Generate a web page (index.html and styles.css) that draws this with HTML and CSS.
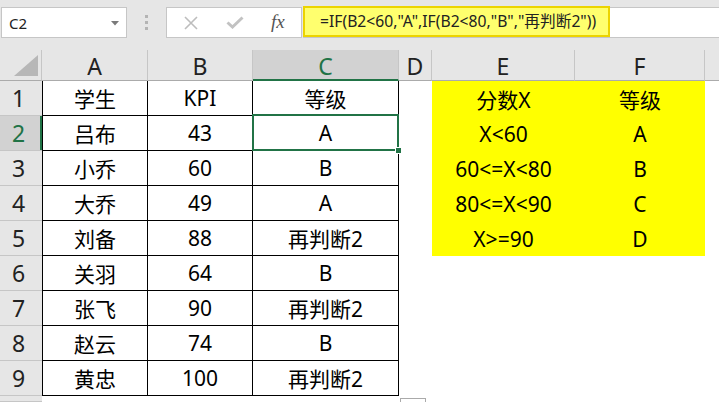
FILE: index.html
```html
<!DOCTYPE html>
<html lang="zh-CN">

<head>
    <meta charset="UTF-8">
    <title>IF 嵌套</title>
    <link rel="stylesheet" href="styles.css">
</head>

<body>
    <div class="toolbar">
        <div class="namebox">
            <span>C2</span>
            <svg class="arrow" width="8" height="5" viewBox="0 0 8 5"><path d="M0 0H8L4 4.5Z" fill="#7a7a7a"/></svg>
        </div>
        <div class="grip"><i></i><i></i><i></i></div>
        <div class="fxbox">
            <svg width="14" height="14" viewBox="0 0 14 14"><path d="M1 1L13 13M13 1L1 13" stroke="#bdbdbd" stroke-width="1.6" fill="none"/></svg>
            <svg width="18" height="13" viewBox="0 0 18 13"><path d="M1.5 6.5L6.5 11L16.5 1.5" stroke="#c2c2c2" stroke-width="3" fill="none"/></svg>
            <span class="fx">fx</span>
        </div>
        <div class="formula">
            <span class="hl">=IF(B2&lt;60,"A",IF(B2&lt;80,"B","再判断2"))</span>
        </div>
    </div>

    <div class="sheet">
        <!-- column headers -->
        <div class="corner"><svg width="24" height="21" viewBox="0 0 24 21"><path d="M24 0V21H0Z" fill="#b7b7b7"/></svg></div>
        <div class="ch">A</div>
        <div class="ch">B</div>
        <div class="ch on">C</div>
        <div class="ch">D</div>
        <div class="ch">E</div>
        <div class="ch">F</div>
        <div class="ch last"></div>

        <div class="rh">1</div>
        <div class="c b first">学生</div>
        <div class="c b">KPI</div>
        <div class="c b">等级</div>
        <div class="c"></div>
        <div class="c y">分数X</div>
        <div class="c y">等级</div>
        <div class="c"></div>

        <div class="rh on">2</div>
        <div class="c b first">吕布</div>
        <div class="c b">43</div>
        <div class="c b sel">A</div>
        <div class="c"></div>
        <div class="c y">X&lt;60</div>
        <div class="c y">A</div>
        <div class="c"></div>

        <div class="rh">3</div>
        <div class="c b first">小乔</div>
        <div class="c b">60</div>
        <div class="c b">B</div>
        <div class="c"></div>
        <div class="c y">60&lt;=X&lt;80</div>
        <div class="c y">B</div>
        <div class="c"></div>

        <div class="rh">4</div>
        <div class="c b first">大乔</div>
        <div class="c b">49</div>
        <div class="c b">A</div>
        <div class="c"></div>
        <div class="c y">80&lt;=X&lt;90</div>
        <div class="c y">C</div>
        <div class="c"></div>

        <div class="rh">5</div>
        <div class="c b first">刘备</div>
        <div class="c b">88</div>
        <div class="c b">再判断2</div>
        <div class="c"></div>
        <div class="c y">X&gt;=90</div>
        <div class="c y">D</div>
        <div class="c"></div>

        <div class="rh">6</div>
        <div class="c b first">关羽</div>
        <div class="c b">64</div>
        <div class="c b">B</div>
        <div class="c"></div>
        <div class="c"></div>
        <div class="c"></div>
        <div class="c"></div>

        <div class="rh">7</div>
        <div class="c b first">张飞</div>
        <div class="c b">90</div>
        <div class="c b">再判断2</div>
        <div class="c"></div>
        <div class="c"></div>
        <div class="c"></div>
        <div class="c"></div>

        <div class="rh">8</div>
        <div class="c b first">赵云</div>
        <div class="c b">74</div>
        <div class="c b">B</div>
        <div class="c"></div>
        <div class="c"></div>
        <div class="c"></div>
        <div class="c"></div>

        <div class="rh">9</div>
        <div class="c b first">黄忠</div>
        <div class="c b">100</div>
        <div class="c b">再判断2</div>
        <div class="c"></div>
        <div class="c"></div>
        <div class="c"></div>
        <div class="c"></div>

        <!-- row 10, only its top edge is in view -->
        <div class="rh"></div>
        <div class="c"></div>
        <div class="c"></div>
        <div class="c"></div>
        <div class="c"></div>
        <div class="c"></div>
        <div class="c"></div>
        <div class="c"></div>

        <div class="quick"></div>
    </div>
</body>

</html>
```

FILE: styles.css
```css
body {
    margin: 0;
    width: 719px;
    height: 402px;
    overflow: hidden;
    background-color: #fff;
    font-family: "Noto Sans", "Noto Sans CJK SC", sans-serif;
}

.toolbar {
    height: 50px;
    box-sizing: border-box;
    padding-top: 7px;
    background-color: #e6e6e6;
    display: flex;
    align-items: flex-start;
}

.namebox {
    margin-left: 1px;
    width: 126px;
    height: 31px;
    box-sizing: border-box;
    border: 1px solid #c6c6c6;
    background-color: #fff;
    display: flex;
    align-items: center;
    justify-content: space-between;
    padding: 0 7px 0 7px;
    font-size: 15px;
    color: #222;
}

.namebox .arrow {
    margin-top: 1px;
}

.grip {
    width: 39px;
    height: 31px;
    display: flex;
    flex-direction: column;
    align-items: center;
    justify-content: center;
    gap: 3px;
}

.grip i {
    display: block;
    width: 3px;
    height: 3px;
    background-color: #b4b4b4;
}

.fxbox {
    width: 136px;
    height: 31px;
    box-sizing: border-box;
    border: 1px solid #c6c6c6;
    background-color: #fff;
    display: flex;
    align-items: center;
    padding-left: 17px;
    gap: 28px;
}

.fx {
    font-family: "Liberation Serif", serif;
    font-style: italic;
    font-size: 19px;
    color: #555;
    margin-left: -1px;
    margin-top: -2px;
}

.formula {
    flex: 1;
    height: 31px;
    margin-left: 1px;
    box-sizing: border-box;
    border-top: 1px solid #c6c6c6;
    border-bottom: 1px solid #c6c6c6;
    background-color: #fff;
    display: flex;
}

.hl {
    width: 307px;
    height: 31px;
    margin-top: -2px;
    box-sizing: border-box;
    border: 2px solid #ecd400;
    background-color: #ffff6e;
    padding-left: 15px;
    font-size: 15.7px;
    line-height: 27px;
    color: #222;
    white-space: nowrap;
}

.sheet {
    position: relative;
    height: 352px;
    display: grid;
    grid-template-columns: 42px 106px 105px 146px 33px 143px 130px 1fr;
    grid-template-rows: 31px repeat(9, 35px) 1fr;
}

.corner {
    background-color: #e6e6e6;
    border-bottom: 1px solid #ababab;
    border-right: 1px solid #c6c6c6;
    display: flex;
    align-items: flex-end;
    justify-content: flex-end;
    padding: 0 3px 4px 0;
}

.ch {
    background-color: #e6e6e6;
    border-right: 1px solid #c6c6c6;
    border-bottom: 1px solid #ababab;
    display: flex;
    align-items: center;
    justify-content: center;
    padding-top: 2px;
    font-size: 23px;
    color: #222;
}

.ch.on {
    background-color: #d2d2d2;
    color: #217346;
    border-bottom: 2px solid #217346;
}

.ch.last {
    border-right: none;
}

.rh {
    background-color: #e6e6e6;
    border-bottom: 1px solid #c6c6c6;
    display: flex;
    align-items: center;
    justify-content: center;
    padding-right: 5px;
    font-size: 23px;
    color: #222;
}

.rh.on {
    background-color: #d2d2d2;
    color: #217346;
    box-shadow: inset -2px 0 0 #217346;
}

.c {
    display: flex;
    align-items: center;
    justify-content: center;
    font-size: 21px;
    color: #000;
    white-space: nowrap;
}

.b {
    border-right: 1px solid #000;
    border-bottom: 1px solid #000;
}

.first {
    border-left: 1px solid #000;
}

.y {
    background-color: #ffff00;
}

.sel {
    position: relative;
}

.sel::after {
    content: "";
    position: absolute;
    left: -1px;
    top: -2px;
    right: -1px;
    bottom: -1px;
    border: 2px solid #217346;
}

.sel::before {
    content: "";
    position: absolute;
    right: -4px;
    bottom: -4px;
    width: 5px;
    height: 5px;
    background-color: #217346;
    border: 1px solid #fff;
    z-index: 1;
}

.quick {
    position: absolute;
    left: 400px;
    top: 348px;
    width: 24px;
    height: 10px;
    border: 1px solid #aaa;
    background-color: #fff;
}
```
